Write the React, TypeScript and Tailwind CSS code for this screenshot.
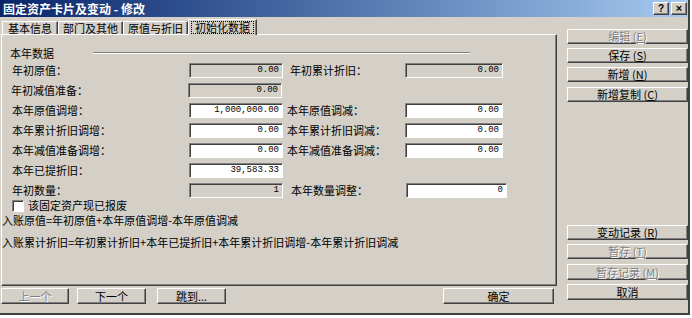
import React from 'react';

const raised =
  'border border-t-white border-l-white border-r-[#404040] border-b-[#404040] shadow-[inset_-1px_-1px_0_#808080] bg-[#d4d0c8]';
const sunken =
  'border border-t-[#808080] border-l-[#808080] border-r-white border-b-white shadow-[inset_1px_1px_0_#404040]';
const disabledText = 'text-[#808080] [text-shadow:1px_1px_0_#fff]';

function Btn({
  children,
  disabled,
  className = '',
}: {
  children: React.ReactNode;
  disabled?: boolean;
  className?: string;
}) {
  return (
    <div
      className={`${raised} ${disabled ? disabledText : 'text-black'} flex items-center justify-center text-[11px] leading-none ${className}`}
    >
      {children}
    </div>
  );
}

function Field({ value, disabled, width }: { value: string; disabled?: boolean; width: string }) {
  return (
    <div
      className={`${sunken} ${width} ${disabled ? 'bg-[#d4d0c8]' : 'bg-white'} h-[15px] flex items-center justify-end pr-[3px] font-['Liberation_Mono',monospace] text-[9px] text-black`}
    >
      {value}
    </div>
  );
}

type Row = {
  left: string;
  leftValue: string;
  leftDisabled?: boolean;
  leftOffset?: string;
  right?: string;
  rightValue?: string;
  rightDisabled?: boolean;
  rightOffset?: string;
  rightLabel?: string;
  rightWidth?: string;
};

const rows: Row[] = [
  { left: '年初原值：', leftValue: '0.00', leftDisabled: true, right: '年初累计折旧：', rightValue: '0.00', rightDisabled: true, rightOffset: 'pl-[3px]', rightLabel: 'w-[115px]' },
  { left: '年初减值准备：', leftValue: '0.00', leftDisabled: true, leftOffset: '-ml-px' },
  { left: '本年原值调增：', leftValue: '1,000,000.00', right: '本年原值调减：', rightValue: '0.00' },
  { left: '本年累计折旧调增：', leftValue: '0.00', right: '本年累计折旧调减：', rightValue: '0.00' },
  { left: '本年减值准备调增：', leftValue: '0.00', right: '本年减值准备调减：', rightValue: '0.00' },
  { left: '本年已提折旧：', leftValue: '39,583.33' },
  { left: '年初数量：', leftValue: '1', leftDisabled: true, right: '本年数量调整：', rightValue: '0', rightOffset: 'pl-[4px]', rightLabel: 'w-[115px]', rightWidth: 'w-[101px]' },
];

const tabs = [
  { label: '基本信息', pad: 'px-[5px]' },
  { label: '部门及其他', pad: 'px-[4px]' },
  { label: '原值与折旧', pad: 'px-[4px]' },
];

export default function App() {
  return (
    <div className="w-[692px] h-[318px] bg-white font-['Noto_Sans_CJK_SC','Noto_Sans',sans-serif] text-[11px] text-black overflow-hidden">
      <div className="w-[690px] h-[315px] bg-[#d4d0c8] border-r-2 border-b-2 border-[#404040] flex flex-col">
        {/* title bar */}
        <div className="h-[17px] shrink-0 bg-gradient-to-r from-[#0a246a] to-[#a6caf0] flex items-center justify-between pl-[3px] pr-[1px]">
          <span className="text-white font-bold text-[12px] leading-none">固定资产卡片及变动 - 修改</span>
          <div className="flex gap-[2px]">
            <div className={`${raised} w-[16px] h-[13px] flex items-center justify-center text-[10px] font-bold leading-none font-['Liberation_Sans',sans-serif]`}>?</div>
            <div className={`${raised} w-[16px] h-[13px] flex items-center justify-center text-[11px] font-bold leading-none font-['Liberation_Sans',sans-serif]`}>×</div>
          </div>
        </div>

        <div className="flex flex-1">
          {/* left area */}
          <div className="w-[557px] flex flex-col">
            {/* tabs */}
            <div className="flex items-end h-[16px] mt-px pl-[2px]">
              {tabs.map((t) => (
                <div
                  key={t.label}
                  className={`h-[13px] ${t.pad} flex items-center border-t border-l border-t-white border-l-white border-r border-r-[#404040] shadow-[inset_-1px_0_0_#808080] leading-none`}
                >
                  {t.label}
                </div>
              ))}
              <div className="h-[16px] px-[2px] flex items-center border-t border-l border-t-white border-l-white border-r border-r-[#404040] shadow-[inset_-1px_0_0_#808080] bg-[#d4d0c8] -mb-px relative z-10">
                <span className="px-[3px] border border-dotted border-black leading-[11px]">初始化数据</span>
              </div>
            </div>

            {/* panel */}
            <div className="ml-px h-[252px] border border-t-white border-l-white border-r-[#404040] border-b-[#404040] shadow-[inset_-1px_-1px_0_#808080] flex flex-col">
              <div className="h-[16px] mt-[10px] flex items-center pl-[8px]">
                <span className="w-[83px]">本年数据</span>
                <div className="w-[377px] h-[2px] border-t border-t-[#808080] border-b border-b-white" />
              </div>
              <div className="flex flex-col gap-[5px] mt-[2px]">
                {rows.map((r) => (
                  <div key={r.left} className="h-[15px] flex items-center">
                    <div className={`flex items-center pl-[10px] ${r.leftOffset ?? ''}`}>
                      <span className="w-[177px]">{r.left}</span>
                      <Field value={r.leftValue} disabled={r.leftDisabled} width="w-[94px]" />
                    </div>
                    {r.right && (
                      <div className={`flex items-center ml-[4px] ${r.rightOffset ?? ''}`}>
                        <span className={r.rightLabel ?? 'w-[118px]'}>{r.right}</span>
                        <Field value={r.rightValue ?? ''} disabled={r.rightDisabled} width={r.rightWidth ?? 'w-[98px]'} />
                      </div>
                    )}
                  </div>
                ))}
              </div>
              <div className="flex items-center mt-px pl-[10px] h-[13px]">
                <div className={`${sunken} w-[12px] h-[12px] bg-white`} />
                <span className="ml-[4px] leading-[13px]">该固定资产现已报废</span>
              </div>
              <div className="h-[13px] leading-[13px] mt-[2px]">入账原值=年初原值+本年原值调增-本年原值调减</div>
              <div className="h-[13px] leading-[13px] mt-[9px]">入账累计折旧=年初累计折旧+本年已提折旧+本年累计折旧调增-本年累计折旧调减</div>
            </div>

            {/* bottom buttons */}
            <div className="flex mt-[2px]">
              <Btn disabled className="w-[68px] h-[16px] ml-px">上一个</Btn>
              <Btn className="w-[69px] h-[16px] ml-[8px]">下一个</Btn>
              <Btn className="w-[69px] h-[16px] ml-[11px]">跳到...</Btn>
              <Btn className="w-[111px] h-[16px] ml-[217px]">确定</Btn>
            </div>
          </div>

          {/* right column */}
          <div className="w-[121px] ml-[10px] flex flex-col">
            <Btn disabled className="h-[15px] mt-[12px]">编辑 (<u>E</u>)</Btn>
            <Btn className="h-[15px] mt-[4px]">保存 (<u>S</u>)</Btn>
            <Btn className="h-[15px] mt-[4px]">新增 (<u>N</u>)</Btn>
            <Btn className="h-[15px] mt-[5px]">新增复制 (<u>C</u>)</Btn>
            <Btn className="h-[15px] mt-[123px]">变动记录 (<u>R</u>)</Btn>
            <Btn disabled className="h-[15px] mt-[4px]">暂存 (<u>T</u>)</Btn>
            <Btn disabled className="h-[16px] mt-[5px]">暂存记录 (<u>M</u>)</Btn>
            <Btn className="h-[16px] mt-[4px]">取消</Btn>
          </div>
        </div>
      </div>
    </div>
  );
}
